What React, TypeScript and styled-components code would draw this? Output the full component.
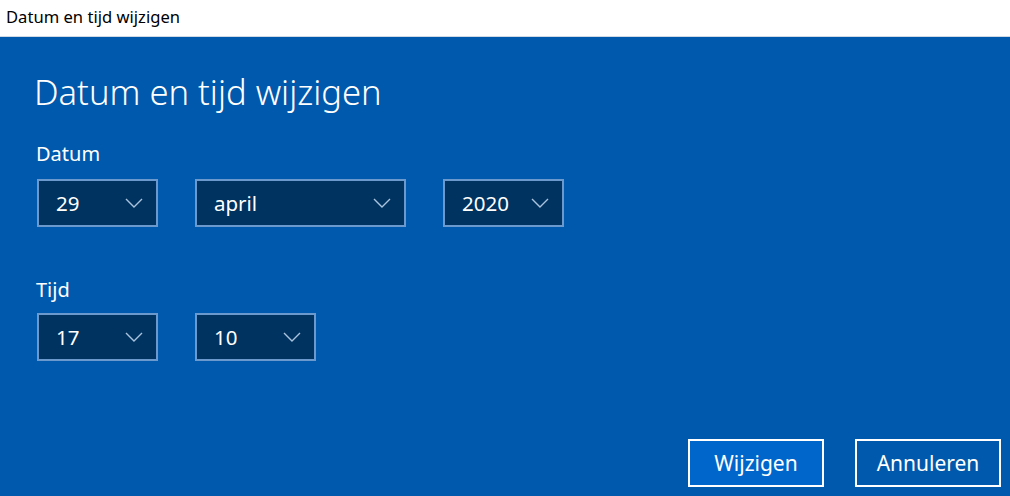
import { createGlobalStyle, styled } from "styled-components";

const GlobalStyle = createGlobalStyle`
  html, body {
    margin: 0;
    padding: 0;
    background: #ffffff;
  }
  body {
    font-family: "Noto Sans", "Open Sans", sans-serif;
  }
`;

const Window = styled.div`
  width: 1010px;
  height: 496px;
  display: flex;
  flex-direction: column;
  overflow: hidden;
`;

const TitleBar = styled.div`
  height: 37px;
  padding: 0 0 4px 6px;
  display: flex;
  align-items: center;
  background: #ffffff;
  border-bottom: 1px solid #cfd9e6;
  color: #000000;
  font-size: 16.6px;
  box-sizing: border-box;
`;

const Panel = styled.div`
  flex: 1;
  display: flex;
  flex-direction: column;
  background: #0059ac;
  padding: 0 9px 9px 37px;
`;

const Heading = styled.h1`
  margin: 33px 0 0 -3px;
  font-size: 34.6px;
  line-height: 44px;
  font-weight: 300;
  color: #ffffff;
`;

const FieldLabel = styled.div<{ $top: number }>`
  margin: ${(p) => p.$top}px 0 0 -1px;
  font-size: 20px;
  line-height: 28px;
  color: #ffffff;
`;

const Row = styled.div<{ $top: number }>`
  display: flex;
  gap: 37px;
  margin-top: ${(p) => p.$top}px;
`;

const SelectBox = styled.div<{ $w: number }>`
  width: ${(p) => p.$w}px;
  height: 48px;
  box-sizing: border-box;
  border: 2px solid #6b98cd;
  background: #003360;
  color: #ffffff;
  display: flex;
  align-items: center;
  justify-content: space-between;
  padding: 0 13px 0 17px;
  font-size: 20.5px;
`;

const Spacer = styled.div`
  flex: 1;
`;

const ButtonBar = styled.div`
  display: flex;
  justify-content: flex-end;
  gap: 31px;
`;

const ActionButton = styled.button<{ $primary?: boolean; $w: number }>`
  width: ${(p) => p.$w}px;
  height: 48px;
  box-sizing: border-box;
  border: 2px solid #ffffff;
  background: ${(p) => (p.$primary ? "#0066cc" : "#0059ac")};
  color: #ffffff;
  font-family: "Noto Sans", "Open Sans", sans-serif;
  font-size: 21px;
  padding: 0;
`;

function Chevron() {
  return (
    <svg width="18" height="10" viewBox="0 0 18 10">
      <path
        d="M1 1 L9 9 L17 1"
        fill="none"
        stroke="#a9c2de"
        strokeWidth="1.4"
      />
    </svg>
  );
}

function Select(prop: { value: string; width: number }) {
  return (
    <SelectBox $w={prop.width}>
      <span>{prop.value}</span>
      <Chevron />
    </SelectBox>
  );
}

export default function App() {
  return (
    <Window>
      <GlobalStyle />
      <TitleBar>Datum en tijd wijzigen</TitleBar>
      <Panel>
        <Heading>Datum en tijd wijzigen</Heading>
        <FieldLabel $top={26}>Datum</FieldLabel>
        <Row $top={11}>
          <Select value="29" width={121} />
          <Select value="april" width={211} />
          <Select value="2020" width={121} />
        </Row>
        <FieldLabel $top={49}>Tijd</FieldLabel>
        <Row $top={9}>
          <Select value="17" width={121} />
          <Select value="10" width={121} />
        </Row>
        <Spacer />
        <ButtonBar>
          <ActionButton $primary $w={136}>
            Wijzigen
          </ActionButton>
          <ActionButton $w={146}>Annuleren</ActionButton>
        </ButtonBar>
      </Panel>
    </Window>
  );
}
